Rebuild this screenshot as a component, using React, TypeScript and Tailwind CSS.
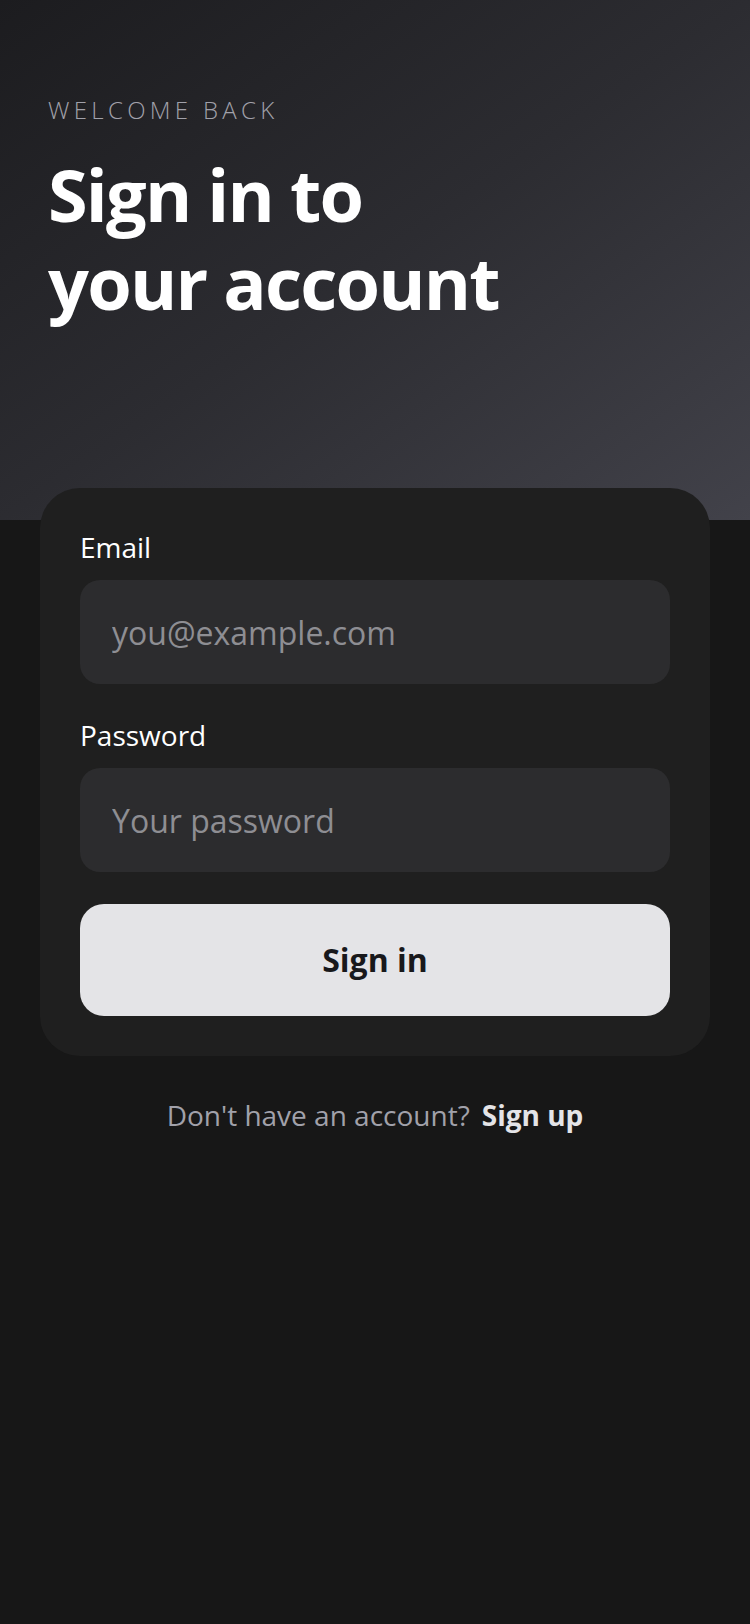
import React from 'react';

const font = { fontFamily: '"Open Sans", "Noto Sans", sans-serif' };

export default function App() {
    return (
        <div style={font} className="min-h-[1624px] w-full bg-[#171717] text-white">
            {/* hero */}
            <div className="h-[520px] bg-linear-to-br from-[#1c1c1f] via-[#2c2c31] to-[#42424a] px-12 pt-[92px]">
                <p className="text-[24px] leading-[36px] font-light tracking-[0.18em] text-[#a1a1aa]">WELCOME BACK</p>
                <h1 className="mt-[22px] text-[72px] leading-[88px] font-bold tracking-tight text-white">
                    Sign in to
                    <br />
                    your account
                </h1>
            </div>

            {/* card */}
            <div className="mx-10 -mt-8 rounded-[40px] bg-[#1f1f1f] p-10">
                <label className="block text-[28px] leading-[38px] text-white">Email</label>
                <input
                    type="email"
                    placeholder="you@example.com"
                    className="mt-3.5 block h-[104px] w-full rounded-[20px] bg-[#2c2c2e] px-8 text-[32px] text-white outline-none placeholder:text-[#8e8e93]"
                />

                <label className="mt-8 block text-[28px] leading-[38px] text-white">Password</label>
                <input
                    type="password"
                    placeholder="Your password"
                    className="mt-3.5 block h-[104px] w-full rounded-[20px] bg-[#2c2c2e] px-8 text-[32px] text-white outline-none placeholder:text-[#8e8e93]"
                />

                <button className="mt-8 flex h-[112px] w-full items-center justify-center rounded-[24px] bg-[#e4e4e7] text-[32px] font-bold text-[#18181b]">
                    Sign in
                </button>
            </div>

            {/* footer */}
            <div className="mt-[38px] flex items-center justify-center gap-3 text-[28px] leading-[42px]">
                <span className="text-[#a1a1aa]">Don't have an account?</span>
                <span className="font-bold text-[#e4e4e7]">Sign up</span>
            </div>
        </div>
    );
}
